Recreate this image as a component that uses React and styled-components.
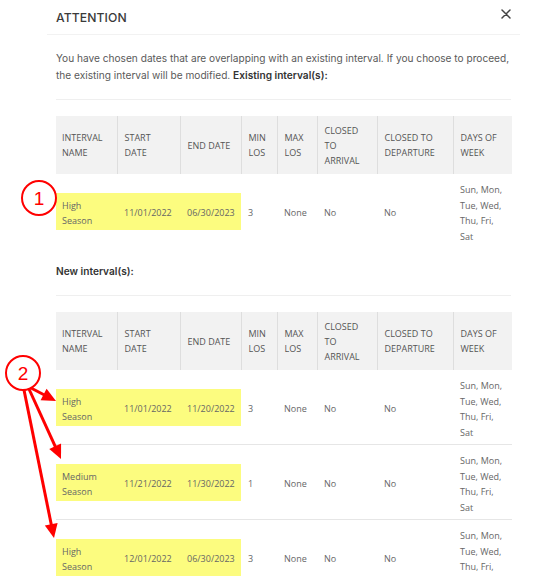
import React from "react";
import styled, { createGlobalStyle } from "styled-components";

const Global = createGlobalStyle`
  html, body { margin: 0; padding: 0; background: #ffffff; }
  body { font-family: "Inter", "Open Sans", sans-serif; }
`;

const Page = styled.div`
  position: relative;
  width: 538px;
  height: 576px;
  overflow: hidden;
  padding-left: 47px;
  box-sizing: border-box;
`;

const Modal = styled.div`
  width: 473px;
  background: #fff;
`;

const Header = styled.div`
  height: 34px;
  border-bottom: 1px solid #f2f2f2;
  display: flex;
  align-items: center;
  justify-content: space-between;
  padding: 0 9px 0 9px;
`;

const Title = styled.div`
  font-family: "Inter", sans-serif;
  font-size: 12.2px;
  font-weight: 500;
  color: #3a3a3a;
  letter-spacing: 0.1px;
  margin-top: 1px;
`;

const Close = styled.button`
  border: 0;
  background: none;
  padding: 0;
  width: 10px;
  height: 10px;
  display: flex;
  margin-top: -6px;
  cursor: pointer;
`;

const Body = styled.div`
  padding: 0 8px 0 9px;
`;

const Paragraph = styled.p`
  margin: 15px 0 0;
  font-family: "Inter", sans-serif;
  font-size: 10.15px;
  line-height: 17px;
  color: #5a5a5a;
  white-space: nowrap;
`;

const Strong = styled.span`
  font-weight: 600;
  color: #333;
`;

const Label = styled.div`
  margin-top: 15px;
  font-family: "Inter", sans-serif;
  font-size: 10.15px;
  line-height: 17px;
  font-weight: 600;
  color: #333;
`;

const Divider = styled.hr`
  border: 0;
  border-top: 1px solid #efefef;
  margin: 15px 1px 16px 0;
  height: 0;
`;

const Table = styled.table`
  width: 456px;
  table-layout: fixed;
  border-collapse: collapse;
  font-family: "Open Sans", sans-serif;
`;

const HeadRow = styled.tr`
  height: 58px;
  background: #f2f2f2;
`;

const Th = styled.th`
  text-align: left;
  font-weight: 400;
  font-size: 9px;
  line-height: 15px;
  color: #555;
  padding: 6px 6px 6px 7px;
  vertical-align: middle;
  border-left: 1px solid #dedede;
  &:first-child { border-left: 0; padding-left: 6px; }
`;

const Row = styled.tr`
  height: 74px;
  & + & { border-top: 1px solid #e6e6e6; }
`;

const Td = styled.td`
  font-size: 9px;
  line-height: 15.5px;
  color: #666;
  padding: 8px 6px 4px 7px;
  vertical-align: middle;
  &:first-child { padding-left: 6px; padding-right: 12px; }
  ${(p) =>
    p.$mark &&
    `background: linear-gradient(#fcfc7f, #fcfc7f) center / 100% 37px no-repeat;`}
`;

const Overlay = styled.svg`
  position: absolute;
  left: 0;
  top: 0;
  pointer-events: none;
`;

const cols = [61, 63, 61, 36, 40, 60, 76, 59];
const heads = [
  "INTERVAL NAME",
  "START DATE",
  "END DATE",
  "MIN LOS",
  "MAX LOS",
  "CLOSED TO ARRIVAL",
  "CLOSED TO DEPARTURE",
  "DAYS OF WEEK",
];
const DAYS = "Sun, Mon, Tue, Wed, Thu, Fri, Sat";

const existing = [["High Season", "11/01/2022", "06/30/2023", "3", "None", "No", "No", DAYS]];
const added = [
  ["High Season", "11/01/2022", "11/20/2022", "3", "None", "No", "No", DAYS],
  ["Medium Season", "11/21/2022", "11/30/2022", "1", "None", "No", "No", DAYS],
  ["High Season", "12/01/2022", "06/30/2023", "3", "None", "No", "No", DAYS],
];

function IntervalTable({ rows }) {
  return (
    <Table>
      <colgroup>
        {cols.map((w, i) => (
          <col key={i} style={{ width: w }} />
        ))}
      </colgroup>
      <thead>
        <HeadRow>
          {heads.map((h) => (
            <Th key={h}>{h}</Th>
          ))}
        </HeadRow>
      </thead>
      <tbody>
        {rows.map((r, i) => (
          <Row key={i}>
            {r.map((c, j) => (
              <Td key={j} $mark={j < 3}>
                {c}
              </Td>
            ))}
          </Row>
        ))}
      </tbody>
    </Table>
  );
}

function Arrow({ x1, y1, x2, y2 }) {
  const dx = x2 - x1;
  const dy = y2 - y1;
  const len = Math.hypot(dx, dy);
  const ux = dx / len;
  const uy = dy / len;
  const hl = 14;
  const hw = 6.5;
  const bx = x2 - ux * hl;
  const by = y2 - uy * hl;
  const pts = `${x2},${y2} ${bx - uy * hw},${by + ux * hw} ${bx + uy * hw},${by - ux * hw}`;
  return (
    <g>
      <line x1={x1} y1={y1} x2={bx + ux * 2} y2={by + uy * 2} stroke="#ff0000" strokeWidth="3" />
      <polygon points={pts} fill="#ff0000" />
    </g>
  );
}

function Badge({ cx, cy, n }) {
  return (
    <g>
      <circle cx={cx} cy={cy} r="17" fill="#fff" stroke="#ff0000" strokeWidth="2" />
      <text
        x={cx}
        y={cy + 6.5}
        textAnchor="middle"
        fontFamily="Liberation Sans, Arial, sans-serif"
        fontSize="19"
        fill="#ff0000"
      >
        {n}
      </text>
    </g>
  );
}

export default function App() {
  return (
    <>
      <Global />
      <Page>
        <Modal>
          <Header>
            <Title>ATTENTION</Title>
            <Close aria-label="Close">
              <svg width="10" height="10" viewBox="0 0 10 10">
                <path d="M1 1 L9 9 M9 1 L1 9" stroke="#444" strokeWidth="1.5" strokeLinecap="round" />
              </svg>
            </Close>
          </Header>
          <Body>
            <Paragraph>
              You have chosen dates that are overlapping with an existing interval. If you choose to proceed,
              <br />
              the existing interval will be modified. <Strong>Existing interval(s):</Strong>
            </Paragraph>
            <Divider />
            <IntervalTable rows={existing} />
            <Label>New interval(s):</Label>
            <Divider />
            <IntervalTable rows={added} />
          </Body>
        </Modal>
        <Overlay width="538" height="576" viewBox="0 0 538 576">
          <Arrow x1={31} y1={388} x2={56} y2={401} />
          <Arrow x1={29} y1={389} x2={61} y2={459} />
          <Arrow x1={24} y1={390} x2={54} y2={538} />
          <Badge cx={39} cy={198} n="1" />
          <Badge cx={23} cy={373} n="2" />
        </Overlay>
      </Page>
    </>
  );
}
